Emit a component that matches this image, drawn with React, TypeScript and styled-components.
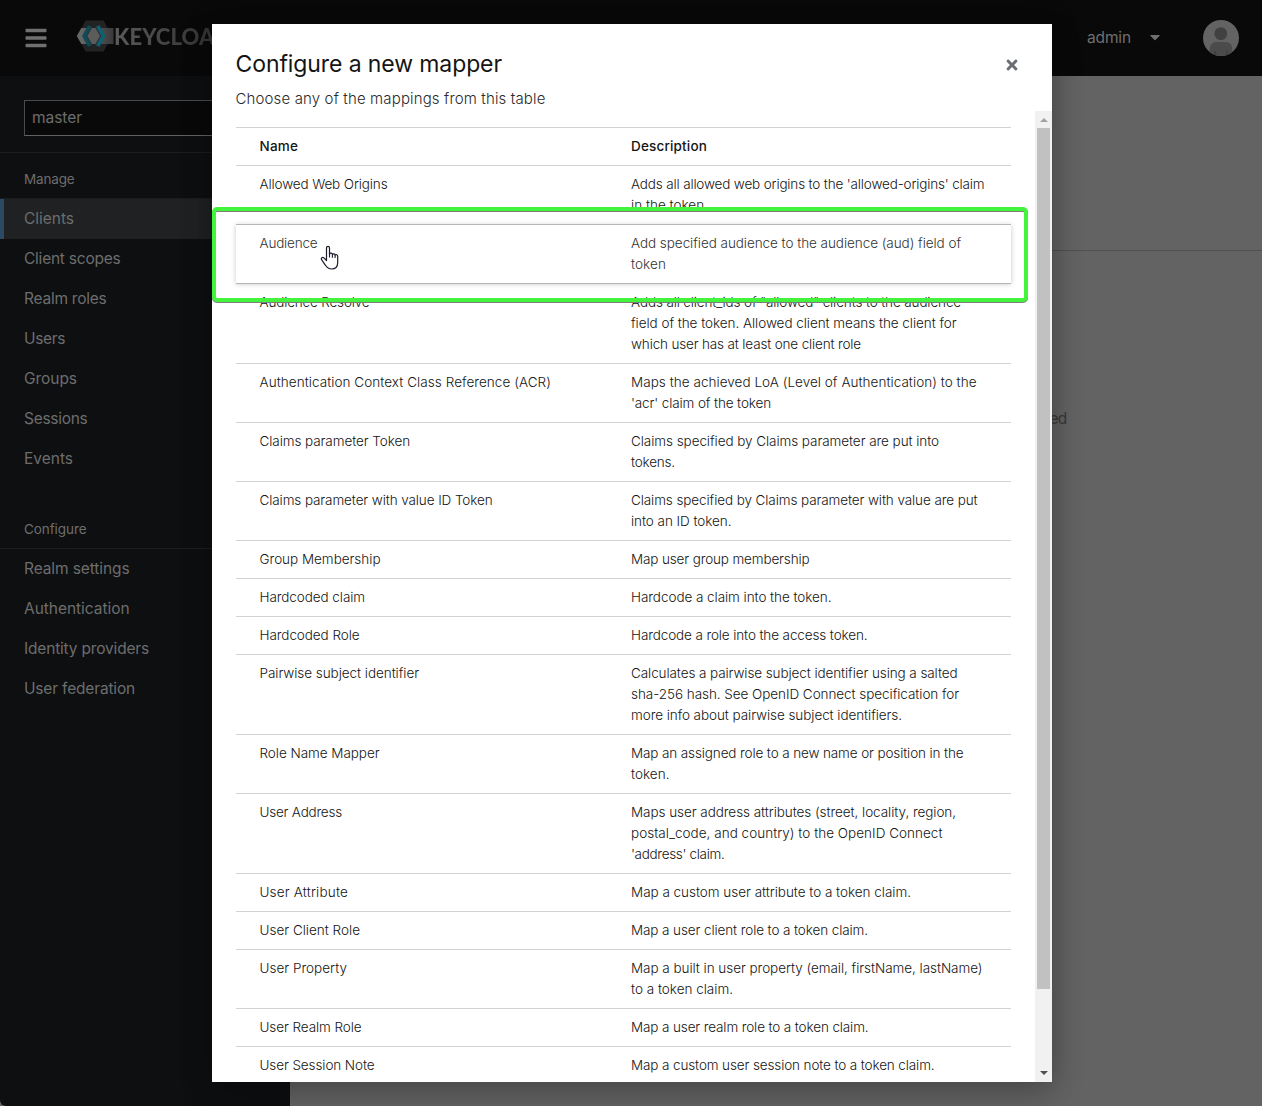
import React, { useLayoutEffect, useRef, useState } from 'react';
import styled, { createGlobalStyle, css } from 'styled-components';
import { FaBars, FaCaretDown, FaTimes } from 'react-icons/fa';

const Global = createGlobalStyle`
  * { box-sizing: border-box; }
  html, body { margin: 0; background: #636363; }
  body {
    font-family: Inter, "Open Sans", sans-serif;
    font-size: 13.5px;
    line-height: 21px;
    overflow: hidden;
  }
`;

const Run = styled.span`
  display: inline-block;
  white-space: nowrap;
`;

/* Spreads a single line of text over the given measure. */
function Line({ width, children }: { width: number; children: string }) {
  const ref = useRef<HTMLSpanElement>(null);
  const [tracking, setTracking] = useState(0);
  useLayoutEffect(() => {
    if (ref.current) {
      const natural = ref.current.getBoundingClientRect().width;
      setTracking((width - natural) / children.length);
    }
  }, [width, children]);
  return (
    <Run ref={ref} style={{ letterSpacing: tracking }}>
      {children}
    </Run>
  );
}

const Page = styled.div`
  position: relative;
  display: flex;
  flex-direction: column;
  width: 1262px;
  height: 1106px;
  overflow: hidden;
  background: #636363;
`;

const Masthead = styled.header`
  display: flex;
  align-items: center;
  height: 76px;
  padding: 0 23px 0 24px;
  background: #090909;
  color: #6f6f6f;
`;

const MenuButton = styled.button`
  display: flex;
  padding: 0;
  border: 0;
  background: none;
  color: #707070;
`;

const Brand = styled.div`
  display: flex;
  align-items: center;
  margin: -4px 0 0 28px;
`;

const Wordmark = styled.span`
  margin-top: 1px;
  font: 900 22px/30px Lato, "Open Sans", sans-serif;
  background: linear-gradient(90deg, #5a5a5a, #353535 90px);
  background-clip: text;
  color: transparent;
`;

const UserMenu = styled.div`
  display: flex;
  align-items: center;
  margin-left: auto;
  font-size: 15.5px;
  gap: 16px;
`;

const UserToggle = styled.div`
  display: flex;
  align-items: center;
  gap: 16px;
  margin-top: -2px;
`;

const AvatarSlot = styled.div`
  display: flex;
  margin-left: 24px;
`;

const Body = styled.div`
  display: flex;
  flex: 1;
`;

const Sidebar = styled.nav`
  width: 290px;
  background: #0d0f11;
  color: #6d6d6d;
  border-bottom-left-radius: 6px;
`;

const RealmArea = styled.div`
  padding: 24px 24px 16px;
  border-bottom: 1px solid #1b1d1f;
`;

const RealmSelect = styled.div`
  height: 36px;
  padding: 0 7px;
  border: 1px solid #4b4b4b;
  border-bottom-color: #626262;
  background: #090909;
  font-size: 15.5px;
  line-height: 34px;
`;

const NavSection = styled.section`
  & + & {
    margin-top: 24px;
  }
`;

const NavTitle = styled.h2`
  margin: 0;
  padding: 16px 24px 8px;
  border-bottom: 1px solid #1b1d1f;
  font-size: 13.5px;
  font-weight: 400;
`;

const NavItem = styled.div<{ $active?: boolean }>`
  height: 40px;
  padding-left: 24px;
  font-size: 15.5px;
  line-height: 39px;
  ${(p) =>
    p.$active &&
    css`
      background: #1f2123;
      box-shadow: inset 4px 0 #2c4a63;
    `}
`;

const Main = styled.main`
  flex: 1;
  color: #383838;
`;

const MainHeader = styled.div`
  height: 175px;
  border-bottom: 1px solid #505050;
`;

const EmptyState = styled.p`
  margin: 157px 0 0 759.5px;
  font-size: 15.5px;
`;

const Backdrop = styled.div`
  position: absolute;
  inset: 0;
  display: flex;
  justify-content: center;
  padding: 24px 0 24px 2px;
`;

const Dialog = styled.div`
  position: relative;
  display: flex;
  flex-direction: column;
  width: 840px;
  height: 1058px;
  background: #fff;
  color: #151515;
  box-shadow: 0 14px 32px rgba(3, 3, 3, 0.16), 0 0 26px rgba(3, 3, 3, 0.22);
`;

const DialogHeader = styled.header`
  display: flex;
  justify-content: space-between;
  height: 87px;
  padding: 24px 32px 0 23.5px;
`;

const Title = styled.h1`
  margin: 0;
  padding-top: 1px;
  font-size: 23px;
  font-weight: 400;
  line-height: 31px;
`;

const Subtitle = styled.p`
  margin: 7px 0 0;
  color: #2a2a2a;
  font-size: 15px;
  font-weight: 300;
  line-height: 24px;
`;

const CloseButton = styled.button`
  display: flex;
  align-self: flex-start;
  margin-top: 9px;
  padding: 0;
  border: 0;
  background: none;
  color: #6a6e73;
`;

const DialogBody = styled.div`
  display: flex;
  flex: 1;
  min-height: 0;
`;

const Scroller = styled.div`
  flex: 1;
  padding: 16px 24px 0;
  overflow: hidden;
`;

const Row = styled.div<{ $hovered?: boolean }>`
  display: grid;
  grid-template-columns: 371.5px 1fr;
  padding: 8px 24px 8px 23.5px;
  border-bottom: 1px solid #d2d2d2;
  font-weight: 300;
  ${(p) =>
    p.$hovered &&
    css`
      border-bottom-color: #b6b6b6;
      box-shadow: 0 -1px #b6b6b6, 0 0 5px rgba(3, 3, 3, 0.22);
      color: #333;
    `}
`;

const HeadRow = styled(Row)`
  border-top: 1px solid #d2d2d2;
  font-weight: 500;
`;

const Cell = styled.div`
  display: flex;
  flex-direction: column;
  align-items: flex-start;
`;

const Scrollbar = styled.div`
  display: flex;
  flex-direction: column;
  align-items: center;
  width: 17px;
  background: #f1f1f1;
`;

const Arrow = styled.div<{ $down?: boolean }>`
  display: grid;
  place-items: center;
  height: 17px;
  padding-bottom: ${(p) => (p.$down ? 1 : 0)}px;
  &::before {
    content: '';
    border: 4px solid transparent;
    ${(p) =>
      p.$down
        ? 'border-top-color: #505050; border-bottom: 0;'
        : 'border-bottom-color: #a3a3a3; border-top: 0;'}
  }
`;

const Thumb = styled.div`
  width: 13px;
  height: 861px;
  margin-bottom: auto;
  background: #c1c1c1;
`;

const Highlight = styled.div`
  position: absolute;
  top: 183px;
  left: 0;
  width: 816px;
  height: 95px;
  border: 4px solid #43f33c;
  border-radius: 5px;
  filter: drop-shadow(0 1px 0 #7d7d7d);
`;

const Pointer = styled.svg`
  position: absolute;
  top: 221px;
  left: 107.5px;
`;

type Text = [string, number];

const manage: Text[] = [
  ['Clients', 50], ['Client scopes', 96.5], ['Realm roles', 82.5], ['Users', 41],
  ['Groups', 53], ['Sessions', 63.5], ['Events', 49],
];
const configure: Text[] = [
  ['Realm settings', 105.5], ['Authentication', 105.5],
  ['Identity providers', 125], ['User federation', 111],
];

const mappers: { name: Text; lines: Text[] }[] = [
  { name: ['Allowed Web Origins', 128], lines: [["Adds all allowed web origins to the 'allowed-origins' claim", 353.5], ['in the token.', 77]] },
  { name: ['Audience', 58], lines: [['Add specified audience to the audience (aud) field of', 330], ['token', 35]] },
  { name: ['Audience Resolve', 110], lines: [['Adds all client_ids of "allowed" clients to the audience', 330], ['field of the token. Allowed client means the client for', 325.5], ['which user has at least one client role', 230]] },
  { name: ['Authentication Context Class Reference (ACR)', 291.5], lines: [['Maps the achieved LoA (Level of Authentication) to the', 345.5], ["'acr' claim of the token", 140]] },
  { name: ['Claims parameter Token', 150.5], lines: [['Claims specified by Claims parameter are put into', 308], ['tokens.', 44]] },
  { name: ['Claims parameter with value ID Token', 233], lines: [['Claims specified by Claims parameter with value are put', 346.5], ['into an ID token.', 100.5]] },
  { name: ['Group Membership', 121], lines: [['Map user group membership', 178.5]] },
  { name: ['Hardcoded claim', 105.5], lines: [['Hardcode a claim into the token.', 200.5]] },
  { name: ['Hardcoded Role', 100], lines: [['Hardcode a role into the access token.', 236.5]] },
  { name: ['Pairwise subject identifier', 159.5], lines: [['Calculates a pairwise subject identifier using a salted', 326.5], ['sha-256 hash. See OpenID Connect specification for', 328], ['more info about pairwise subject identifiers.', 271]] },
  { name: ['Role Name Mapper', 120], lines: [['Map an assigned role to a new name or position in the', 332.5], ['token.', 38.5]] },
  { name: ['User Address', 82.5], lines: [['Maps user address attributes (street, locality, region,', 325], ['postal_code, and country) to the OpenID Connect', 311.5], ["'address' claim.", 93.5]] },
  { name: ['User Attribute', 88.5], lines: [['Map a custom user attribute to a token claim.', 280]] },
  { name: ['User Client Role', 100.5], lines: [['Map a user client role to a token claim.', 237]] },
  { name: ['User Property', 87.5], lines: [['Map a built in user property (email, firstName, lastName)', 351.5], ['to a token claim.', 102]] },
  { name: ['User Realm Role', 102], lines: [['Map a user realm role to a token claim.', 237.5]] },
  { name: ['User Session Note', 115], lines: [['Map a custom user session note to a token claim.', 303.5]] },
];

const KeycloakMark = () => (
  <svg width="38" height="34" viewBox="0 0 38 34">
    <defs>
      <linearGradient id="band" x1="0" x2="1">
        <stop offset="0" stopColor="#6a6a6a" />
        <stop offset="0.45" stopColor="#585858" />
        <stop offset="1" stopColor="#3a3a3a" />
      </linearGradient>
    </defs>
    <path d="M9.5 1.500h18L36 17l-8.500 15.500h-18L1.500 17z" fill="#222324" />
    <path d="M5.300 9H37.500v16H5.300L.8 17z" fill="url(#band)" />
    <path d="M14.500 9h8l4.500 8-4.500 8h-8L10 17z" fill="#5c5c5c" />
    <path d="M15.700 7.500 10.200 17l5.500 9.500" fill="none" stroke="#2e3234" strokeWidth="2" />
    <path d="M19.600 7.500 25.200 17l-5.600 9.500" fill="none" stroke="#2e3234" strokeWidth="2" />
    <path d="M13.600 7 8.100 17l5.500 10" fill="none" stroke="#0d4c5b" strokeWidth="3.600" />
    <path d="M21.800 7 27.500 17l-5.700 10" fill="none" stroke="#0e6073" strokeWidth="3.600" />
  </svg>
);

const Avatar = () => (
  <svg width="36" height="36" viewBox="0 0 36 36">
    <defs>
      <clipPath id="face"><circle cx="18" cy="18" r="18" /></clipPath>
    </defs>
    <g clipPath="url(#face)">
      <path d="M0 0h36v36H0z" fill="#636363" />
      <circle cx="17.800" cy="13.600" r="6.400" fill="#414141" />
      <path d="M6.800 36v-7c0-4.500 3-7 7-7h8.400c4 0 7 2.500 7 7v7z" fill="#4b4b4b" />
      <path d="M12 31v5M24 31v5" stroke="#414141" strokeWidth="2" />
    </g>
  </svg>
);

const Nav = ({ title, items, active }: { title: Text; items: Text[]; active?: string }) => (
  <NavSection>
    <NavTitle><Line width={title[1]}>{title[0]}</Line></NavTitle>
    {items.map(([label, width]) => (
      <NavItem key={label} $active={label === active}>
        <Line width={width}>{label}</Line>
      </NavItem>
    ))}
  </NavSection>
);

export default function App() {
  return (
    <Page>
      <Global />
      <Masthead>
        <MenuButton aria-label="Menu"><FaBars size={24} /></MenuButton>
        <Brand>
          <KeycloakMark />
          <Wordmark><Line width={116}>KEYCLOAK</Line></Wordmark>
        </Brand>
        <UserMenu>
          <UserToggle>
            <Line width={44}>admin</Line>
            <FaCaretDown size={16} />
          </UserToggle>
          <AvatarSlot><Avatar /></AvatarSlot>
        </UserMenu>
      </Masthead>
      <Body>
        <Sidebar>
          <RealmArea>
            <RealmSelect><Line width={50}>master</Line></RealmSelect>
          </RealmArea>
          <Nav title={['Manage', 50.5]} items={manage} active="Clients" />
          <Nav title={['Configure', 62.5]} items={configure} />
        </Sidebar>
        <Main>
          <MainHeader />
          <EmptyState><Line width={17}>ed</Line></EmptyState>
        </Main>
      </Body>
      <Backdrop>
        <Dialog>
          <DialogHeader>
            <div>
              <Title><Line width={266.5}>Configure a new mapper</Line></Title>
              <Subtitle><Line width={310}>Choose any of the mappings from this table</Line></Subtitle>
            </div>
            <CloseButton aria-label="Close"><FaTimes size={16} /></CloseButton>
          </DialogHeader>
          <DialogBody>
            <Scroller>
              <HeadRow>
                <Cell><Line width={38.5}>Name</Line></Cell>
                <Cell><Line width={76}>Description</Line></Cell>
              </HeadRow>
              {mappers.map(({ name, lines }) => (
                <Row key={name[0]} $hovered={name[0] === 'Audience'}>
                  <Cell><Line width={name[1]}>{name[0]}</Line></Cell>
                  <Cell>
                    {lines.map(([text, width]) => <Line key={text} width={width}>{text}</Line>)}
                  </Cell>
                </Row>
              ))}
            </Scroller>
            <Scrollbar>
              <Arrow />
              <Thumb />
              <Arrow $down />
            </Scrollbar>
          </DialogBody>
          <Highlight />
          <Pointer width="20" height="26" viewBox="0 0 20 26">
            <path
              d="M6.500 15.500V3c0-2.300 3-2.300 3 0v6c.6-1.300 2.700-1 2.900.4.700-1 2.500-.6 2.700.6.900-.8 2.600-.2 2.600 1.300v6.200c0 4-2.500 6.500-6.200 6.500-3 0-4.600-1.500-6-3.700L1.600 14.700c-.9-1.700.9-2.900 2.300-1.800z"
              fill="#fff" stroke="#1b1b2c" strokeWidth="1.200" strokeLinejoin="round"
            />
            <path d="M9.500 8v4.500M12.400 9.500v3.300M15.100 10v3" stroke="#1b1b2c" strokeWidth="1.100" />
          </Pointer>
        </Dialog>
      </Backdrop>
    </Page>
  );
}
